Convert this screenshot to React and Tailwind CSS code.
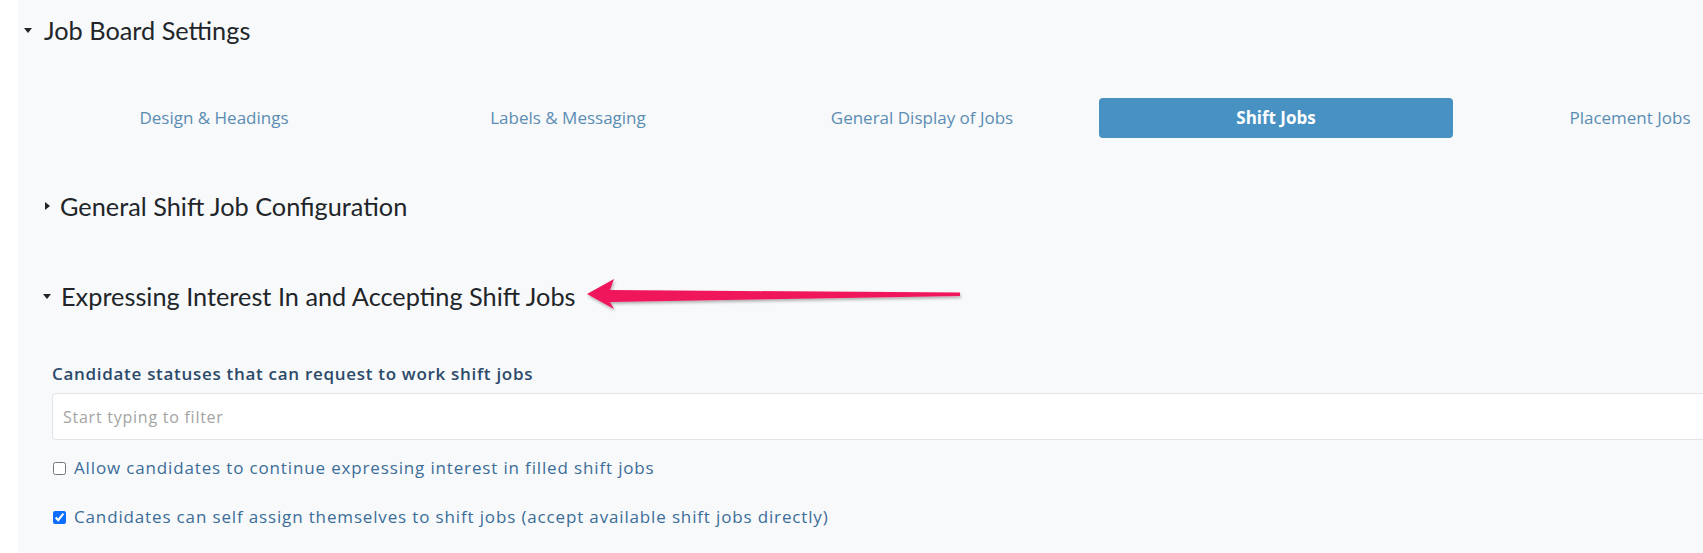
import { useState } from "react";

const tabs = [
  "Design & Headings",
  "Labels & Messaging",
  "General Display of Jobs",
  "Shift Jobs",
  "Placement Jobs",
];

const CaretDown = () => (
  <svg width="8" height="5" viewBox="0 0 8 5" className="shrink-0">
    <path d="M0 0 L8 0 L4 5 Z" fill="#212529" />
  </svg>
);

const CaretRight = () => (
  <svg width="5" height="8" viewBox="0 0 5 8" className="shrink-0">
    <path d="M0 0 L5 4 L0 8 Z" fill="#212529" />
  </svg>
);

const App = () => {
  const [active, setActive] = useState("Shift Jobs");
  const [allowFilled, setAllowFilled] = useState(false);
  const [selfAssign, setSelfAssign] = useState(true);

  return (
    <div className="relative flex h-[553px] w-full overflow-hidden bg-white">
      <div className="w-[18px] shrink-0 bg-white" />
      <div className="w-[1790px] shrink-0 bg-[#f8f9fb] pt-[12px]">
        <div className="flex items-center gap-[12px] pl-[6px] font-['Lato',sans-serif] text-[25.3px] leading-9 text-[#212529]">
          <CaretDown />
          <span>Job Board Settings</span>
        </div>

        <div className="mt-[50px] ml-[19px] grid w-[1770px] grid-cols-5 font-['Open_Sans',sans-serif] text-[17px]">
          {tabs.map((t) => (
            <button
              key={t}
              onClick={() => setActive(t)}
              className={
                t === active
                  ? "flex h-[40px] items-center justify-center rounded-[4px] bg-[#4791c3] font-bold text-white"
                  : "flex h-[40px] items-center justify-center text-[#5b8db3]"
              }
            >
              {t}
            </button>
          ))}
        </div>

        <div className="mt-[50px] flex items-center gap-[10px] pl-[27px] font-['Lato',sans-serif] text-[25.3px] leading-9 text-[#212529]">
          <CaretRight />
          <span>General Shift Job Configuration</span>
        </div>

        <div className="mt-[54px] flex items-center gap-[10px] pl-[25px] font-['Lato',sans-serif] text-[25.3px] leading-9 text-[#212529]">
          <CaretDown />
          <span>Expressing Interest In and Accepting Shift Jobs</span>
        </div>

        <div className="pl-[34px] font-['Open_Sans',sans-serif]">
          <div className="mt-[48px] text-[17px] font-semibold leading-6 tracking-[0.7px] text-[#2c4a6a]">
            Candidate statuses that can request to work shift jobs
          </div>
          <input
            type="text"
            placeholder="Start typing to filter"
            className="mt-[7px] h-[47px] w-[1740px] rounded-[4px] border border-[#e2e4e7] bg-white px-[10px] text-[16px] tracking-[0.75px] text-[#333] outline-none placeholder:text-[#a3a3a3]"
          />
          <label className="mt-[16px] flex items-center gap-[8px] pl-[1px] text-[17px] leading-6 tracking-[0.85px] text-[#3b6d98]">
            <input
              type="checkbox"
              checked={allowFilled}
              onChange={(e) => setAllowFilled(e.target.checked)}
              className="h-[13px] w-[13px] accent-[#0d6efd]"
            />
            Allow candidates to continue expressing interest in filled shift jobs
          </label>
          <label className="mt-[25px] flex items-center gap-[8px] pl-[1px] text-[17px] leading-6 tracking-[0.85px] text-[#3b6d98]">
            <input
              type="checkbox"
              checked={selfAssign}
              onChange={(e) => setSelfAssign(e.target.checked)}
              className="h-[13px] w-[13px] accent-[#0d6efd]"
            />
            Candidates can self assign themselves to shift jobs (accept available shift jobs directly)
          </label>
        </div>
      </div>

      {/* annotation arrow */}
      <svg
        className="pointer-events-none absolute left-0 top-0"
        width="1703"
        height="553"
        viewBox="0 0 1703 553"
      >
        <defs>
          <filter id="sh" x="-10%" y="-50%" width="120%" height="200%">
            <feDropShadow dx="1" dy="2" stdDeviation="1.5" floodColor="#000" floodOpacity="0.3" />
          </filter>
        </defs>
        <polygon
          points="587,294 614,279 610,290 960,292.5 960,296 610,302 614,309"
          fill="#f0195b"
          filter="url(#sh)"
        />
      </svg>
    </div>
  );
};

export default App;
